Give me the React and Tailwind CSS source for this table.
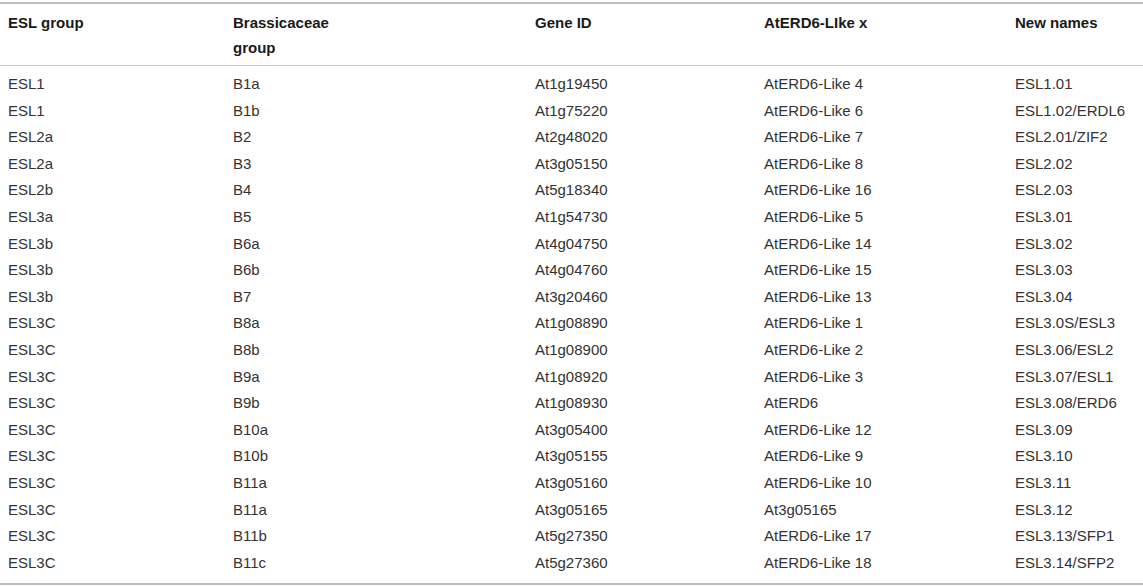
const rows = [
  ["ESL1", "B1a", "At1g19450", "AtERD6-Like 4", "ESL1.01"],
  ["ESL1", "B1b", "At1g75220", "AtERD6-Like 6", "ESL1.02/ERDL6"],
  ["ESL2a", "B2", "At2g48020", "AtERD6-Like 7", "ESL2.01/ZIF2"],
  ["ESL2a", "B3", "At3g05150", "AtERD6-Like 8", "ESL2.02"],
  ["ESL2b", "B4", "At5g18340", "AtERD6-Like 16", "ESL2.03"],
  ["ESL3a", "B5", "At1g54730", "AtERD6-Like 5", "ESL3.01"],
  ["ESL3b", "B6a", "At4g04750", "AtERD6-Like 14", "ESL3.02"],
  ["ESL3b", "B6b", "At4g04760", "AtERD6-Like 15", "ESL3.03"],
  ["ESL3b", "B7", "At3g20460", "AtERD6-Like 13", "ESL3.04"],
  ["ESL3C", "B8a", "At1g08890", "AtERD6-Like 1", "ESL3.0S/ESL3"],
  ["ESL3C", "B8b", "At1g08900", "AtERD6-Like 2", "ESL3.06/ESL2"],
  ["ESL3C", "B9a", "At1g08920", "AtERD6-Like 3", "ESL3.07/ESL1"],
  ["ESL3C", "B9b", "At1g08930", "AtERD6", "ESL3.08/ERD6"],
  ["ESL3C", "B10a", "At3g05400", "AtERD6-Like 12", "ESL3.09"],
  ["ESL3C", "B10b", "At3g05155", "AtERD6-Like 9", "ESL3.10"],
  ["ESL3C", "B11a", "At3g05160", "AtERD6-Like 10", "ESL3.11"],
  ["ESL3C", "B11a", "At3g05165", "At3g05165", "ESL3.12"],
  ["ESL3C", "B11b", "At5g27350", "AtERD6-Like 17", "ESL3.13/SFP1"],
  ["ESL3C", "B11c", "At5g27360", "AtERD6-Like 18", "ESL3.14/SFP2"],
];

const cols = "grid grid-cols-[225px_302px_229px_251px_1fr]";

export default function App() {
  return (
    <div className="w-[1143px] h-[587px] bg-white pt-[2px] font-['Liberation_Sans',Arial,sans-serif] text-[15px] overflow-hidden">
      {/* header */}
      <div className={`${cols} border-t-2 border-b border-t-[#bdbdbd] border-b-[#c8c8c8] pt-[6px] pb-[5px] pl-2 leading-[25px] font-bold text-[#1a1a1a]`}>
        <div>ESL group</div>
        <div>Brassicaceae<br />group</div>
        <div>Gene ID</div>
        <div>AtERD6-LIke x</div>
        <div>New names</div>
      </div>

      {/* body */}
      <div className="pt-[5px] pb-[7px] border-b-2 border-[#bdbdbd] text-[#333]">
        {rows.map((r, i) => (
          <div key={i} className={`${cols} h-[26.6px] items-center pl-2`}>
            {r.map((c, j) => (
              <div key={j}>{c}</div>
            ))}
          </div>
        ))}
      </div>
    </div>
  );
}
